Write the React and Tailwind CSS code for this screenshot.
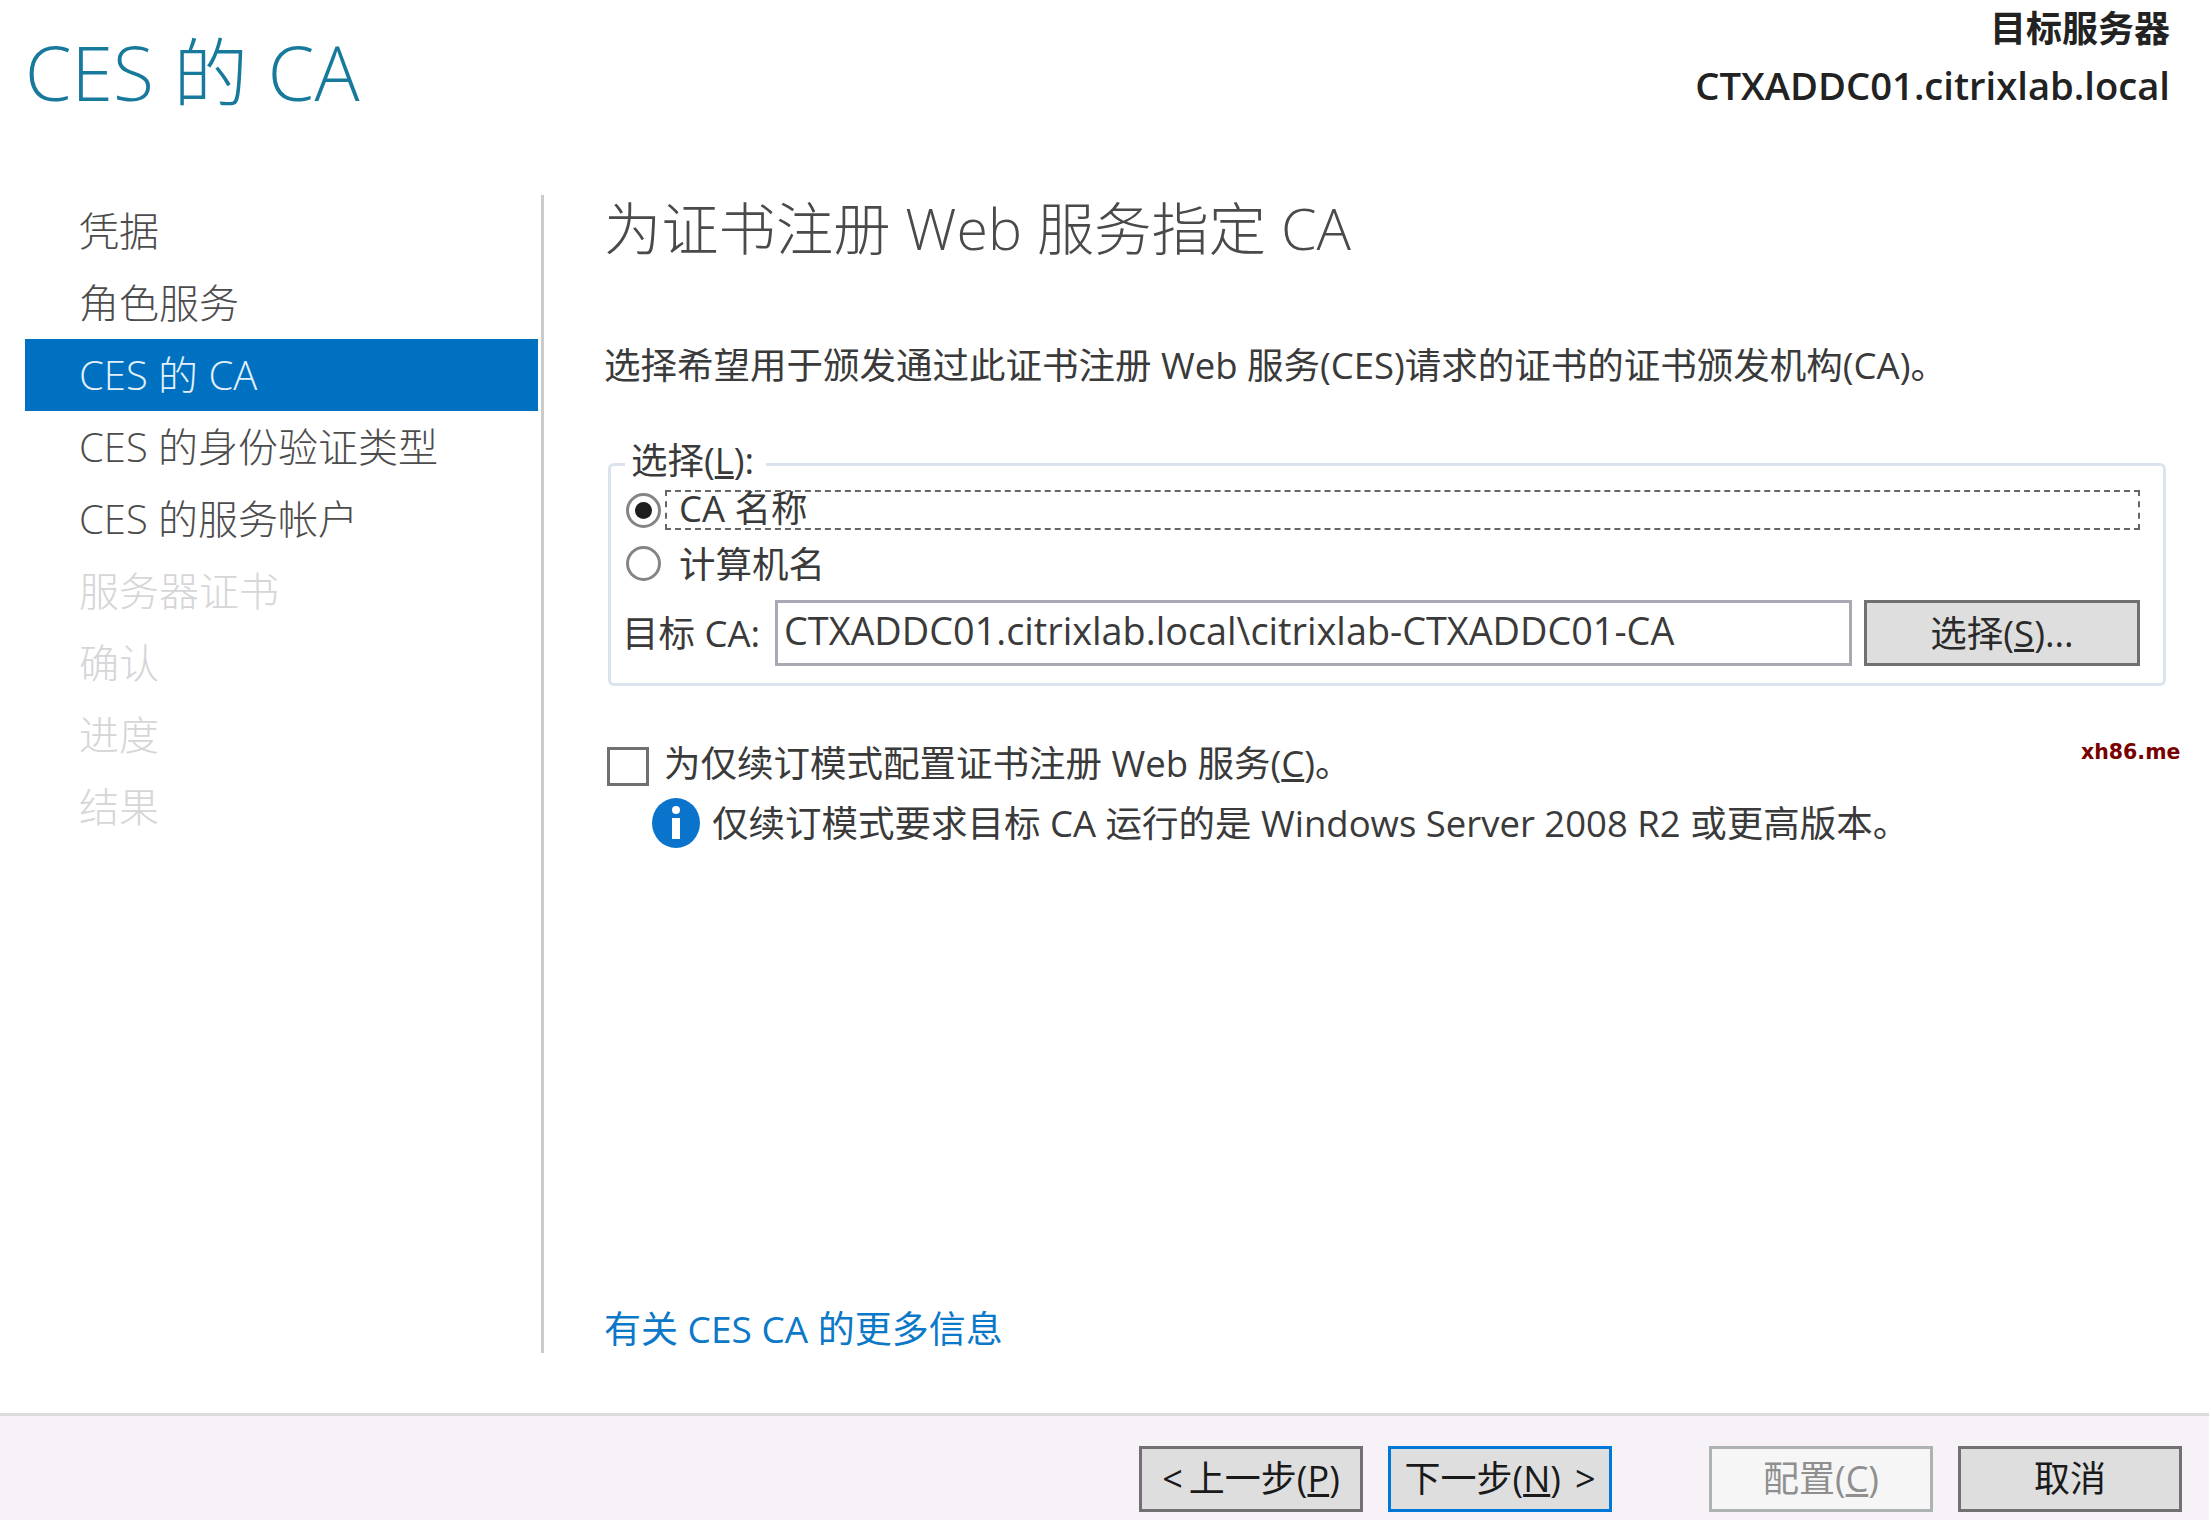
const font = { fontFamily: '"Open Sans", "Noto Sans CJK SC", sans-serif' }

const steps = [
  { label: '凭据' },
  { label: '角色服务' },
  { label: 'CES 的 CA', active: true },
  { label: 'CES 的身份验证类型' },
  { label: 'CES 的服务帐户' },
  { label: '服务器证书', disabled: true },
  { label: '确认', disabled: true },
  { label: '进度', disabled: true },
  { label: '结果', disabled: true },
]

function Step({ label, active, disabled }) {
  const tone = active
    ? 'bg-[#0070c0] text-[#e4f1fb]'
    : disabled
      ? 'text-[#d6d5d8]'
      : 'text-[#4c4c4c]'
  return <div className={`h-[72px] flex items-center pl-[54px] text-[40px] font-light ${tone}`}>{label}</div>
}

function Radio({ checked }) {
  return (
    <span className="w-[35px] h-[35px] shrink-0 rounded-full border-[3px] border-[#858585] flex items-center justify-center">
      {checked && <span className="w-[17px] h-[17px] rounded-full bg-[#1e1e1e]" />}
    </span>
  )
}

function WizardButton({ children, focused, disabled }) {
  const tone = disabled
    ? 'bg-[#f6f6f6] border-[#adb2b2] text-[#8f8f8f]'
    : focused
      ? 'bg-[#dedede] border-[#0078d7] text-[#1a1a1a]'
      : 'bg-[#dedede] border-[#727072] text-[#1a1a1a]'
  return (
    <button className={`w-[224px] h-[66px] border-[3px] text-[36px] flex items-center justify-center ${tone}`}>
      {children}
    </button>
  )
}

export default function App() {
  return (
    <div style={font} className="relative w-[2209px] h-[1520px] bg-white flex flex-col overflow-hidden">
      <header className="h-[195px] shrink-0 flex justify-between pl-[25px] pr-[39px]">
        <h1 className="text-[75px] leading-[96px] mt-[24px] font-light text-[#17799b]">CES 的 CA</h1>
        <div className="text-right text-[#222] font-semibold">
          <div className="leading-[57px] text-[36px]">目标服务器</div>
          <div className="leading-[57px] text-[38.2px]">CTXADDC01.citrixlab.local</div>
        </div>
      </header>

      <main className="h-[1158px] shrink-0 flex">
        <nav className="ml-[25px] w-[519px] pr-[3px] border-r-[3px] border-[#cbcbcb] shrink-0">
          {steps.map(s => <Step key={s.label} {...s} />)}
        </nav>

        <section className="ml-[60px] w-[1575px] flex flex-col text-[#3a3a3a] text-[36.5px]">
          <h2 className="h-[66px] leading-[66px] text-[57.3px] font-light text-[#4a4a4a]">为证书注册 Web 服务指定 CA</h2>
          <p className="mt-[80px] leading-[48px]">选择希望用于颁发通过此证书注册 Web 服务(CES)请求的证书的证书颁发机构(CA)。</p>

          <div className="relative mt-[74px] ml-[4px] w-[1558px] h-[223px] border-[3px] border-[#dbe4ee] rounded-[6px] pt-[24px] pl-[15px] pr-[23px]">
            <div className="absolute -top-[26px] left-[14px] h-[40px] pl-[6px] pr-[12px] leading-[40px]">
              <span className="absolute left-0 right-0 top-[20px] h-[10px] bg-white" />
              <span className="relative">选择(<u>L</u>):</span>
            </div>
            <div className="h-[40px] flex items-center">
              <Radio checked />
              <div className="ml-[4px] flex-1 h-[40px] border-2 border-dashed border-[#666] pl-[12px] leading-[33px]">CA 名称</div>
            </div>
            <div className="mt-[16px] h-[35px] flex items-center">
              <Radio />
              <span className="ml-[18px] relative top-[1px]">计算机名</span>
            </div>
            <div className="mt-[19px] h-[66px] flex items-center">
              <span className="-ml-[4px] w-[153px] shrink-0">目标 CA:</span>
              <div className="w-[1077px] h-[66px] border-[3px] border-[#a9a9b3] pl-[6px] leading-[56px] text-[37.8px] whitespace-nowrap">
                CTXADDC01.citrixlab.local\citrixlab-CTXADDC01-CA
              </div>
              <button className="ml-[12px] w-[276px] h-[66px] border-[3px] border-[#707070] bg-[#dedede] text-[#2a2a2a]">
                选择(<u>S</u>)...
              </button>
            </div>
          </div>

          <label className="mt-[61px] ml-[3px] h-[39px] flex items-center">
            <span className="w-[42px] h-[39px] shrink-0 border-[3px] border-[#707070]" />
            <span className="ml-[15px] relative -top-[3px]">为仅续订模式配置证书注册 Web 服务(<u>C</u>)。</span>
          </label>

          <div className="mt-[12px] ml-[48px] h-[50px] flex items-center">
            <svg width="48" height="50" viewBox="0 0 48 50" className="shrink-0">
              <ellipse cx="24" cy="25" rx="24" ry="25" fill="#0a74cc" />
              <circle cx="24" cy="12" r="4" fill="#fff" />
              <rect x="20" y="20" width="8" height="21" fill="#fff" />
            </svg>
            <span className="ml-[12px]">仅续订模式要求目标 CA 运行的是 Windows Server 2008 R2 或更高版本。</span>
          </div>

          <a className="mt-auto leading-[48px] text-[37px] text-[#0b78c8]">有关 CES CA 的更多信息</a>
        </section>
      </main>

      <footer className="mt-[60px] flex-1 border-t-[3px] border-[#dcdadd] bg-[#f6f2f7] pt-[30px] pr-[27px] flex justify-end">
        <WizardButton>&lt; <span className="ml-[6px]">上一步(<u>P</u>)</span></WizardButton>
        <div className="ml-[25px]"><WizardButton focused><span>下一步(<u>N</u>)</span><span className="ml-[14px]">&gt;</span></WizardButton></div>
        <div className="ml-[97px]"><WizardButton disabled>配置(<u>C</u>)</WizardButton></div>
        <div className="ml-[25px]"><WizardButton>取消</WizardButton></div>
      </footer>

      {/* watermark sits over the page */}
      <div className="absolute left-[2081px] top-[737px] text-[20.5px] leading-[30px] font-bold text-[#7a0000] [font-family:'DejaVu_Sans',sans-serif]">xh86.me</div>
    </div>
  )
}
